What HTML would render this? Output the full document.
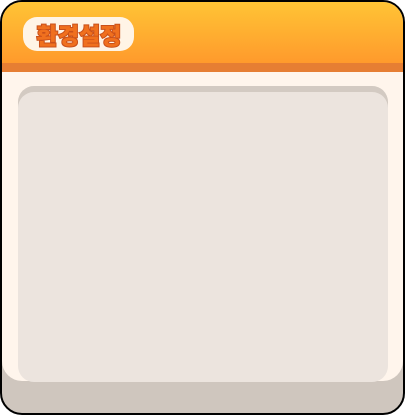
<!DOCTYPE html><html><head><style>
html,body{margin:0;padding:0;background:#fff;}
.win{position:absolute;left:0;top:0;width:401px;height:411px;border:2px solid #000;border-radius:22px;overflow:hidden;background:#cfc6be;}
.hdr{position:absolute;left:0;top:0;right:0;height:61px;background:linear-gradient(#ffc435,#ff9a2c);}
.band{position:absolute;left:0;top:61px;right:0;height:9px;background:#e67e33;}
.body{position:absolute;left:0;top:70px;right:0;height:309px;background:#fff5ec;border-radius:0 0 20px 20px;}
.panel{position:absolute;left:16px;top:84px;width:370px;height:296px;border-radius:16px;background:#ece4de;box-shadow:inset 0 6px 0 #d3cac2;}
.pill{position:absolute;left:21px;top:15px;width:111px;height:34px;border-radius:14px;background:#fff4e6;}
.t{position:absolute;left:30px;top:16px;width:94px;text-align:center;font:900 23px "Noto Sans CJK KR","NanumGothic",sans-serif;color:#f0701e;-webkit-text-stroke:2px #c9501a;paint-order:stroke fill;letter-spacing:0;line-height:32px;}
</style></head><body>
<div class="win">
<div class="hdr"></div><div class="band"></div><div class="body"></div>
<div class="panel"></div>
<div class="pill"></div>
<div class="t">환경설정</div>
</div>
</body></html>
